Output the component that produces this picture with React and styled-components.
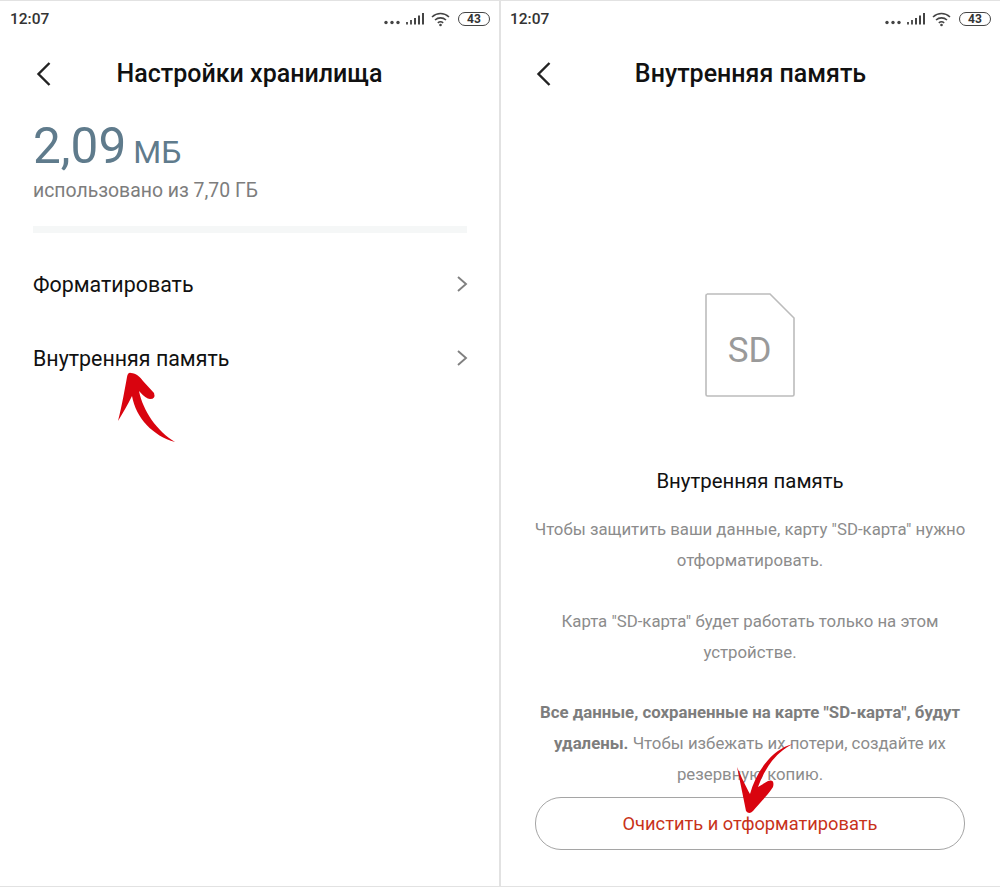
import React from 'react';
import styled, { createGlobalStyle } from 'styled-components';

const Global = createGlobalStyle`
  html, body {
    margin: 0;
    padding: 0;
    background: #fff;
  }
  body {
    font-family: Roboto, "Liberation Sans", sans-serif;
  }
`

const Page = styled.div`
  position: relative;
  width: 1000px;
  height: 887px;
  display: grid;
  grid-template-columns: 499px 499px;
  column-gap: 2px;
  background: #e2e2e2;
  padding: 1px 0;
  box-sizing: border-box;
  overflow: hidden;
`

const Screen = styled.div`
  background: #fff;
  display: flex;
  flex-direction: column;
  min-width: 0;
`

const StatusBar = styled.div`
  height: 36px;
  padding: 0 9px 0 ${props => props.$left}px;
  display: flex;
  align-items: center;
  justify-content: space-between;
  color: #333;
  font-size: 15.5px;
  font-weight: 500;
`

const StatusIcons = styled.div`
  display: flex;
  align-items: center;
  gap: 7px;
`

const Battery = styled.div`
  width: 30px;
  height: 12px;
  border: 1px solid #444;
  border-radius: 7px;
  font-size: 12px;
  line-height: 12px;
  font-weight: 700;
  text-align: center;
  color: #333;
`

const Header = styled.div`
  height: 74px;
  display: grid;
  grid-template-columns: 1fr auto 1fr;
  align-items: center;
  padding: 0 ${props => props.$side}px;
`

const Title = styled.div`
  text-align: center;
  font-size: 25px;
  font-weight: 500;
  color: #111;
  margin-top: -1px;
`

const Usage = styled.div`
  padding: 0 33px;
`

const Amount = styled.div`
  color: #5f7b8c;
  font-size: 49.5px;
  line-height: 60px;
  font-weight: 400;
  margin-top: 5px;
  display: flex;
  align-items: baseline;
  gap: 7px;
  span {
    font-size: 32px;
  }
`

const UsedOf = styled.div`
  color: #7d7d7d;
  font-size: 19.4px;
  line-height: 26px;
  margin-top: -4px;
`

const Divider = styled.div`
  height: 7px;
  margin: 22px 32px 0 33px;
  background: #f5f7f7;
`

const Row = styled.div`
  height: 74px;
  padding: 0 31px 0 33px;
  display: flex;
  align-items: center;
  justify-content: space-between;
  font-size: 21.4px;
  color: #111;
`

const Rows = styled.div`
  margin-top: 14px;
`

const Body = styled.div`
  flex: 1;
  display: flex;
  flex-direction: column;
  align-items: center;
  padding: 182px 1px 0 0;
`

const Name = styled.div`
  font-size: 20.4px;
  color: #111;
  line-height: 26px;
  margin-top: 71px;
`

const Text = styled.p`
  width: 440px;
  margin: ${props => props.$top}px 0 0;
  text-align: center;
  font-size: 16.8px;
  line-height: 31px;
  color: #8c8c8c;
  b {
    font-weight: 700;
    color: #7d7d7d;
  }
`

const WipeButton = styled.div`
  width: 428px;
  height: 51px;
  margin-top: 7px;
  border: 1px solid #a5a5a5;
  border-radius: 26px;
  display: flex;
  align-items: center;
  justify-content: center;
  color: #c8321a;
  font-size: 18.3px;
`

const Mark = styled.svg`
  position: absolute;
  left: 0;
  top: 0;
  pointer-events: none;
`

const Signal = () => (
  <svg width="40" height="14" viewBox="0 0 40 14">
    <circle cx="2" cy="10.5" r="1.7" fill="#444" />
    <circle cx="8" cy="10.5" r="1.7" fill="#444" />
    <circle cx="14" cy="10.5" r="1.7" fill="#444" />
    <rect x="22" y="10" width="2" height="2.5" fill="#555" />
    <rect x="26" y="8" width="2" height="4.5" fill="#555" />
    <rect x="30" y="6" width="2" height="6.5" fill="#444" />
    <rect x="34" y="3.5" width="2" height="9" fill="#444" />
    <rect x="38" y="1" width="2" height="11.5" fill="#444" />
  </svg>
)

const Wifi = () => (
  <svg width="20" height="15" viewBox="0 0 20 15" fill="none" stroke="#444" strokeWidth="1.6">
    <path d="M1 5 C6 0.4 13 0.4 18 5" />
    <path d="M4 8 C7.2 5.2 11.8 5.2 15 8" />
    <path d="M6.8 10.8 C8.4 9.6 10.6 9.6 12.2 10.8" />
    <circle cx="9.5" cy="13" r="1.3" fill="#444" stroke="none" />
  </svg>
)

const Back = () => (
  <svg width="16" height="26" viewBox="0 0 16 26" fill="none" stroke="#222" strokeWidth="2.4">
    <path d="M13.5 2 L2.5 13 L13.5 24" />
  </svg>
)

const Chevron = () => (
  <svg width="12" height="18" viewBox="0 0 12 18" fill="none" stroke="#808080" strokeWidth="1.9">
    <path d="M2 2 L10 9 L2 16" />
  </svg>
)

const SdCard = () => (
  <svg width="90" height="104" viewBox="0 0 90 104" fill="none">
    <path d="M2 1 H65 L89 25 V101.5 Q89 103 87.5 103 H2.5 Q1 103 1 101.5 V2.5 Q1 1 2.5 1 Z" stroke="#bcbcbc" strokeWidth="1.6" />
    <text x="44.5" y="69" textAnchor="middle" fontFamily="Roboto, sans-serif" fontSize="35" fill="#9a9a9a">SD</text>
  </svg>
)

export default function App() {
  return (
    <Page>
      <Global />
      <Screen>
        <StatusBar $left={10}>
          <span>12:07</span>
          <StatusIcons>
            <Signal />
            <Wifi />
            <Battery>43</Battery>
          </StatusIcons>
        </StatusBar>
        <Header $side={36}>
          <Back />
          <Title>Настройки хранилища</Title>
        </Header>
        <Usage>
          <Amount>2,09 <span>МБ</span></Amount>
          <UsedOf>использовано из 7,70 ГБ</UsedOf>
        </Usage>
        <Divider />
        <Rows>
          <Row>Форматировать <Chevron /></Row>
          <Row>Внутренняя память <Chevron /></Row>
        </Rows>
      </Screen>
      <Screen>
        <StatusBar $left={9}>
          <span>12:07</span>
          <StatusIcons>
            <Signal />
            <Wifi />
            <Battery>43</Battery>
          </StatusIcons>
        </StatusBar>
        <Header $side={35}>
          <Back />
          <Title>Внутренняя память</Title>
        </Header>
        <Body>
          <SdCard />
          <Name>Внутренняя память</Name>
          <Text $top={20}>Чтобы защитить ваши данные, карту "SD-карта" нужно отформатировать.</Text>
          <Text $top={30}>Карта "SD-карта" будет работать только на этом устройстве.</Text>
          <Text $top={29}><b>Все данные, сохраненные на карте "SD-карта", будут удалены.</b> Чтобы избежать их потери, создайте их резервную копию.</Text>
          <WipeButton>Очистить и отформатировать</WipeButton>
        </Body>
      </Screen>
      <Mark width="1000" height="887" viewBox="0 0 1000 887">
        <path d="M131 373 C136 373 140 377 143 381 L154 393 Q156 399 150 399 Q146 399 139 391 C143 411 157 431 175 442 C153 436 136 418 132 396 C128 404 123 413 118 421 C122 405 125 388 127 377 Q128 372 131 373 Z" fill="#d9040f" />
        <path d="M793 744 C776 752 765 768 758 787 L768 781 Q775 779 773 787 C767 796 759 804 753 811 Q749 815 746 811 C743 796 740 781 737 767 C741 776 746 787 750 794 C756 772 772 749 793 744 Z" fill="#d9040f" />
      </Mark>
    </Page>
  )
}
